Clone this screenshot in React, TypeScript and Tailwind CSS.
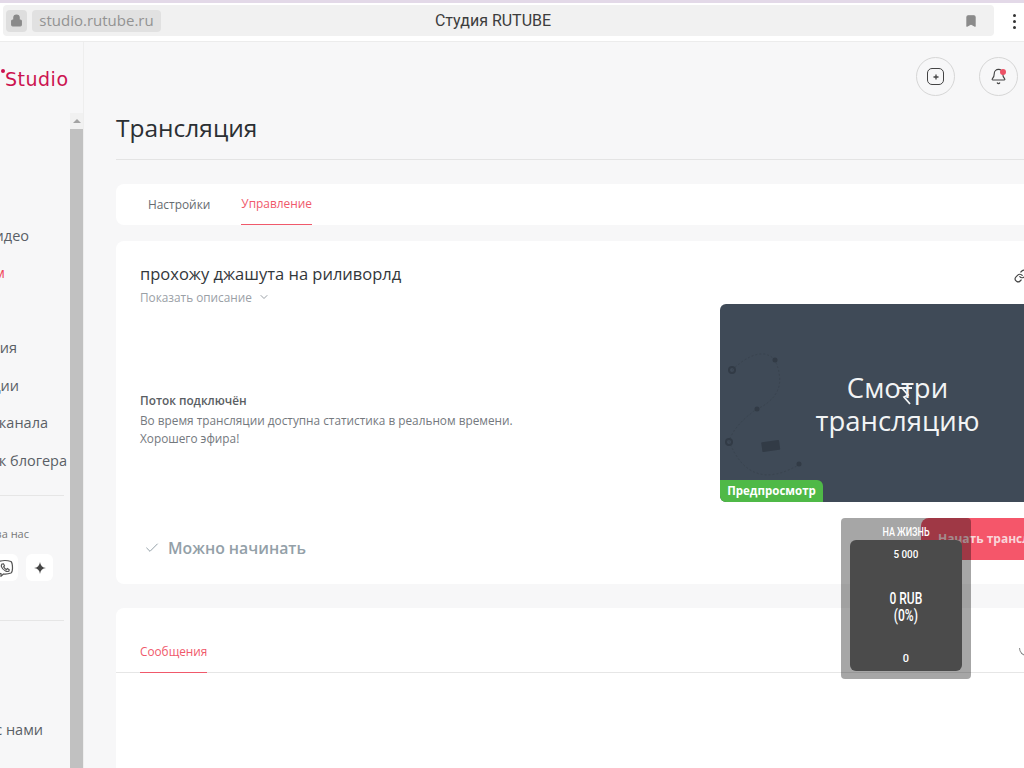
import { Check, ChevronDown, Link, Lock, Bookmark, Bell } from "lucide-react";

const NAV_ROWS = [
  { label: "Мои видео", width: "w-[29px]", color: "text-[#5a5f66]" },
  { label: "Стрим", width: "w-[5px]", color: "text-[#f0485c]" },
  { label: "", width: "w-[0px]", color: "" },
  { label: "Комментария", width: "w-[17px]", color: "text-[#5a5f66]" },
  { label: "Трансляции", width: "w-[19px]", color: "text-[#5a5f66]" },
  { label: "Настройки канала", width: "w-[48px]", color: "text-[#5a5f66]" },
  { label: "Рынок блогера", width: "w-[67px]", color: "text-[#5a5f66]" },
];

function BrowserBar() {
  return (
    <div className="h-[41px] bg-white border-t-[3px] border-[#e3d9e8] pt-[2px] border-b-0 relative">
      <div className="flex items-center h-[31px] ml-[3px] w-[991px] bg-[#f1f1f1] rounded-sm">
        <div className="w-[21px] h-[22px] ml-[3px] bg-[#dedede] rounded flex items-center justify-center">
          <Lock size={13} fill="#8a8a8a" color="#8a8a8a" />
        </div>
        <div className="ml-[5px] w-[129px] h-[22px] bg-[#e1e1e1] rounded flex items-center justify-center text-[15px] text-[#939393]">
          studio.rutube.ru
        </div>
        <div className="w-[664px] text-center text-[16px] text-[#3d3d3d] font-['Roboto',sans-serif] ml-[-1px] pl-[2px]">
          Студия RUTUBE
        </div>
        <div className="ml-auto mr-[16px]">
          <Bookmark size={14} fill="#8b8b8b" color="#8b8b8b" />
        </div>
      </div>
      <div className="absolute right-[8px] top-[11px] flex flex-col gap-[3px]">
        <div className="w-[3px] h-[3px] rounded-full bg-[#333]" />
        <div className="w-[3px] h-[3px] rounded-full bg-[#333]" />
        <div className="w-[3px] h-[3px] rounded-full bg-[#333]" />
      </div>
    </div>
  );
}

function Sidebar() {
  return (
    <aside className="w-[84px] shrink-0 flex border-r border-[#eeeeee]">
      <div className="w-[70px] shrink-0">
        <div className="relative h-[175px] pt-[23px] pl-[5px] text-[#cc1350] text-[19px] leading-[28px] tracking-[0.5px] whitespace-nowrap font-['DejaVu_Sans',sans-serif]">
          <span className="absolute left-[1px] top-[27px] w-[4px] h-[4px] rounded-full bg-[#cc1350]" />
          Studio
        </div>
        <div className="text-[14.5px]">
          {NAV_ROWS.map((row, i) => (
            <div key={i} className={`h-[37.5px] flex items-center justify-end whitespace-nowrap ${row.width} ${row.color}`}>
              {row.label}
            </div>
          ))}
        </div>
        <div className="h-[15.5px]" />
        <div className="h-px bg-[#e6e6e6] w-[64px]" />
        <div className="flex justify-end w-[29px] whitespace-nowrap mt-[30px] text-[11px] leading-[16px] text-[#777]">Следите за нас</div>
        <div className="flex items-center mt-[12px] gap-[8px] ml-[-9px]">
          <div className="w-[27px] h-[27px] bg-white rounded-md flex items-center justify-center">
            <svg width="18" height="18" viewBox="0 0 18 18" fill="none" stroke="#555" strokeWidth="1.2">
              <path d="M3 2.5 Q9 0.5 15 2.5 Q16.5 4 16.5 9 Q16.5 13 15 14 Q11 15.5 7.5 15 L5 17.2 V14.7 Q2.5 14 1.8 12 Q1 8 1.8 4.5 Q2 3.2 3 2.5 Z" />
              <path d="M6 5 L7.5 4.8 L8.5 6.8 L7.6 7.8 Q8.6 9.8 10.4 10.6 L11.4 9.6 L13.2 10.8 L13 12 Q11.5 13 9.5 12 Q6.5 10.5 5.4 7.6 Q5 6 6 5 Z" />
            </svg>
          </div>
          <div className="w-[27px] h-[27px] bg-white rounded-md flex items-center justify-center">
            <svg width="12" height="12" viewBox="0 0 12 12">
              <path d="M6 0 Q6.6 5.4 12 6 Q6.6 6.6 6 12 Q5.4 6.6 0 6 Q5.4 5.4 6 0 Z" fill="#444" />
            </svg>
          </div>
        </div>
        <div className="h-px bg-[#e6e6e6] w-[64px] mt-[39px]" />
        <div className="flex justify-end w-[43px] whitespace-nowrap mt-[99px] text-[14.5px] leading-[20px] text-[#5a5f66]">Связь с нами</div>
      </div>
      <div className="w-[13px] shrink-0 mt-[71px] bg-[#f1f1f1] flex flex-col items-center">
        <div className="h-[16px] flex items-center justify-center">
          <div className="w-0 h-0 border-x-[4px] border-x-transparent border-b-[4px] border-b-[#a3a3a3]" />
        </div>
        <div className="flex-1 w-full bg-[#c1c1c1]" />
      </div>
    </aside>
  );
}

function PreviewArt() {
  return (
    <svg className="absolute left-0 top-0" width="120" height="198" viewBox="0 0 120 198" fill="none">
      <g stroke="#3a444f" strokeWidth="1" strokeDasharray="2 2">
        <path d="M12 66 Q40 40 55 56 Q70 90 37 105 Q15 120 9 137 Q30 190 80 160" />
      </g>
      <circle cx="12" cy="66" r="3" fill="none" stroke="#323b46" strokeWidth="2" />
      <circle cx="55" cy="56" r="2.5" fill="#323b46" />
      <circle cx="37" cy="105" r="2.5" fill="#323b46" />
      <circle cx="9" cy="138" r="3" fill="none" stroke="#323b46" strokeWidth="2" />
      <circle cx="79" cy="160" r="2.5" fill="#323b46" />
      <rect x="42" y="137" width="18" height="10" rx="1" fill="#323b46" transform="rotate(-8 51 144)" />
    </svg>
  );
}

function Goal() {
  return (
    <div className="absolute left-[841px] top-[518px] w-[130px] h-[161px] bg-black/35 rounded-[4px] p-[9px] pt-[6px] text-white font-['Roboto',sans-serif] font-medium text-center">
      <div className="text-[12px] leading-[16px] scale-x-75">НА ЖИЗНЬ</div>
      <div className="h-[131px] bg-[#4b4b4b] rounded-md flex flex-col items-center justify-between pt-[7px] pb-[4px] text-[11px] leading-[16px]">
        <div className="scale-x-90">5 000</div>
        <div className="text-[16px] leading-[17px] scale-x-75">
          0 RUB
          <br />
          (0%)
        </div>
        <div>0</div>
      </div>
    </div>
  );
}

export default function App() {
  return (
    <div className="relative w-[1024px] h-[768px] overflow-hidden bg-[#f7f7f8] font-['Open_Sans',sans-serif]">
      <BrowserBar />
      <div className="flex h-[727px] border-t border-[#ececec]">
        <Sidebar />
        <main className="flex-1 min-w-0 pl-[32px] overflow-hidden">
          <div className="flex justify-end items-center gap-[24px] h-[68px] pt-[1px] pr-[6px]">
            <div className="w-[39px] h-[39px] rounded-full border border-[#d6d6d6] flex items-center justify-center">
              <div className="w-[17px] h-[17px] rounded-[5px] border-[1.5px] border-[#444] flex items-center justify-center">
                <svg width="6" height="6" viewBox="0 0 6 6">
                  <path d="M3 0.5 V5.5 M0.5 3 H5.5" stroke="#444" strokeWidth="1.3" />
                </svg>
              </div>
            </div>
            <div className="relative w-[39px] h-[39px] rounded-full border border-[#d6d6d6] flex items-center justify-center">
              <Bell size={17} color="#444" strokeWidth={1.6} />
              <div className="absolute left-[20px] top-[11px] w-[6px] h-[6px] rounded-full bg-[#ec5266]" />
            </div>
          </div>
          <div className="w-[1000px]">
            <h1 className="text-[24.5px] leading-[38px] text-[#2b2f33] mt-[-1px]">Трансляция</h1>
            <div className="h-px bg-[#e4e4e4] mt-[12px]" />
            <div className="flex h-[41px] mt-[24px] bg-white rounded-l-lg pl-[32px] gap-[31px] text-[11.9px]">
              <div className="flex items-center text-[#666b70]">Настройки</div>
              <div className="flex items-center text-[#f0596b] border-b border-[#f0596b]">Управление</div>
            </div>
            <section className="mt-[16px] h-[343px] bg-white rounded-l-lg relative flex">
              <div className="w-[604px] shrink-0 pl-[24px] pt-[22px] flex flex-col">
                <h2 className="text-[16.5px] leading-[22px] text-[#33373b]">прохожу джашута на риливорлд</h2>
                <div className="flex items-center gap-[6px] mt-[3px] text-[11.8px] leading-[18px] text-[#9aa0a6]">
                  Показать описание <ChevronDown size={12} />
                </div>
                <div className="mt-[85px] text-[11.8px] leading-[18.5px] font-semibold text-[#5a5e63]">Поток подключён</div>
                <div className="mt-[1px] text-[11.8px] leading-[18.5px] text-[#74797e]">
                  Во время трансляции доступна статистика в реальном времени.
                  <br />
                  Хорошего эфира!
                </div>
                <div className="flex items-center gap-[8px] mt-[89px] pl-[4px] text-[15.8px] leading-[22px] font-semibold text-[#93a0a8]">
                  <Check size={16} strokeWidth={1.5} /> Можно начинать
                </div>
              </div>
              <div className="absolute left-[898px] top-[28px] text-[#444]">
                <Link size={14} />
              </div>
              <div className="absolute left-[604px] top-[63px] w-[396px] h-[198px] bg-[#3f4a57] rounded-l-md overflow-hidden">
                <PreviewArt />
                <div className="w-[355px] pt-[67px] text-center text-[27.5px] leading-[33px] font-medium text-[#f2f4f5]">
                  Смотри
                  <br />
                  трансляцию
                </div>
                <svg className="absolute left-[176px] top-[76px]" width="18" height="26" viewBox="0 0 18 26" fill="none">
                  <path d="M1 8 H16 M6 8 L12 15 L8 17 L14 24" stroke="#f2f4f5" strokeWidth="1.8" />
                </svg>
                <div className="absolute left-0 bottom-0 h-[22px] w-[103px] bg-[#4fb947] rounded-tr-md text-[11.5px] leading-[22px] font-bold text-white text-center">
                  Предпросмотр
                </div>
              </div>
              <div className="absolute left-[805px] top-[277px] w-[195px] h-[42px] bg-[#f5566a] rounded-l-lg flex items-center pl-[17px] text-[12px] font-bold text-[#f9d5d9] whitespace-nowrap">
                Начать трансляцию
              </div>
            </section>
            <section className="mt-[24px] h-[200px] bg-white rounded-l-lg relative">
              <div className="h-[65px] border-b border-[#e6e6e6] pl-[24px] flex">
                <div className="flex items-end pb-[11px] h-[65px] text-[11.8px] text-[#f0596b] border-b border-[#f0596b]">Сообщения</div>
              </div>
              <div className="absolute left-[903px] top-[40px] w-[8px] h-[8px] border-b border-l border-[#888] rounded-bl-full" />
            </section>
          </div>
        </main>
      </div>
      <Goal />
    </div>
  );
}
